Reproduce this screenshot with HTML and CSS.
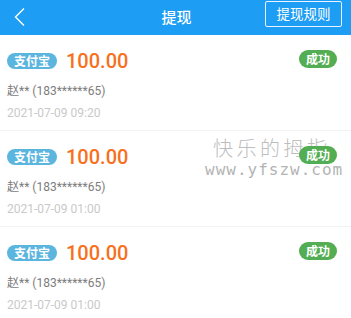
FILE: index.html
```html
<!DOCTYPE html>
<html lang="zh-CN">
<head>
<meta charset="utf-8">
<link rel="stylesheet" href="styles.css">
</head>
<body>
<div class="page">
  <header class="bar">
    <svg class="back" width="12" height="20" viewBox="0 0 12 20"><path d="M10 1.5 L1.5 10 L10 18.5" fill="none" stroke="#fff" stroke-width="1.4"/></svg>
    <div class="title">提现</div>
    <div class="rules">提现规则</div>
  </header>
  <div class="list">
    <div class="row">
      <div class="top">
        <span class="pay">支付宝</span><span class="amount">100.00</span>
        <span class="status">成功</span>
      </div>
      <div class="name">赵** (183******65)</div>
      <div class="date">2021-07-09 09:20</div>
    </div>
    <div class="row">
      <div class="top">
        <span class="pay">支付宝</span><span class="amount">100.00</span>
        <span class="status">成功</span>
      </div>
      <div class="name">赵** (183******65)</div>
      <div class="date">2021-07-09 01:00</div>
    </div>
    <div class="row">
      <div class="top">
        <span class="pay">支付宝</span><span class="amount">100.00</span>
        <span class="status">成功</span>
      </div>
      <div class="name">赵** (183******65)</div>
      <div class="date">2021-07-09 01:00</div>
    </div>
  </div>
  <div class="mark">
    <div class="mark-cn">快乐的拇指</div>
    <div class="mark-en">www.yfszw.com</div>
  </div>
</div>
</body>
</html>
```

FILE: styles.css
```css
* { box-sizing: border-box; }
html, body { margin: 0; padding: 0; background: #fff; }
body {
  font-family: "Roboto", "Noto Sans CJK SC", sans-serif;
  width: 351px;
  height: 318px;
  overflow: hidden;
}
.page { position: relative; width: 351px; height: 318px; }
.bar {
  height: 35px;
  background: #1d9df4;
  display: flex;
  align-items: center;
  padding: 0 9px 0 14px;
  position: relative;
}
.back { display: block; margin-top: -1px; }
.title {
  position: absolute;
  left: 0; right: 0; top: 7px;
  text-align: center;
  color: #fff;
  font-family: "Noto Sans CJK SC", sans-serif;
  font-size: 15px;
  font-weight: 500;
  line-height: 20px;
  padding-left: 2px;
}
.rules {
  margin-left: auto;
  align-self: flex-start;
  margin-top: 1px;
  height: 26px;
  width: 77px;
  border: 1px solid #e8f4ff;
  border-radius: 2px;
  color: #fff;
  font-family: "Noto Sans CJK SC", sans-serif;
  font-size: 13.5px;
  line-height: 23px;
  text-align: center;
  position: relative;
  z-index: 1;
}
.row {
  padding: 15px 14px 9px 7px;
  border-bottom: 1px solid #f3f3f3;
}
.top {
  display: flex;
  align-items: center;
  height: 22px;
}
.pay {
  background: #5bb5df;
  color: #fff;
  font-family: "Noto Sans CJK SC", sans-serif;
  font-size: 12px;
  font-weight: 700;
  height: 16px;
  line-height: 16px;
  width: 50px;
  text-align: center;
  border-radius: 8px;
}
.amount {
  margin-left: 9px;
  color: #f5711d;
  font-size: 20px;
  font-weight: 500;
  line-height: 22px;
}
.status {
  margin-left: auto;
  margin-bottom: 4px;
  background: #52ad53;
  color: #fff;
  font-family: "Noto Sans CJK SC", sans-serif;
  font-size: 12px;
  font-weight: 700;
  width: 38px;
  height: 18px;
  line-height: 18px;
  text-align: center;
  border-radius: 9px;
  position: relative;
  z-index: 2;
}
.name {
  margin-top: 11px;
  font-size: 12px;
  line-height: 16px;
  color: #7d7d7d;
}
.date {
  margin-top: 6px;
  font-size: 12px;
  line-height: 16px;
  color: #c9c9c9;
}
.mark {
  position: absolute;
  left: 205px;
  top: 136px;
  z-index: 1;
  pointer-events: none;
}
.mark-cn {
  padding-left: 8px;
  font-family: "Noto Sans CJK SC", sans-serif;
  font-size: 20px;
  font-weight: 300;
  letter-spacing: 3.5px;
  line-height: 24px;
  color: #bdbdbd;
}
.mark-en {
  font-family: "DejaVu Sans Mono", monospace;
  font-size: 16px;
  letter-spacing: 1px;
  line-height: 18px;
  color: #b3b3b3;
  margin-top: 1px;
}
```
